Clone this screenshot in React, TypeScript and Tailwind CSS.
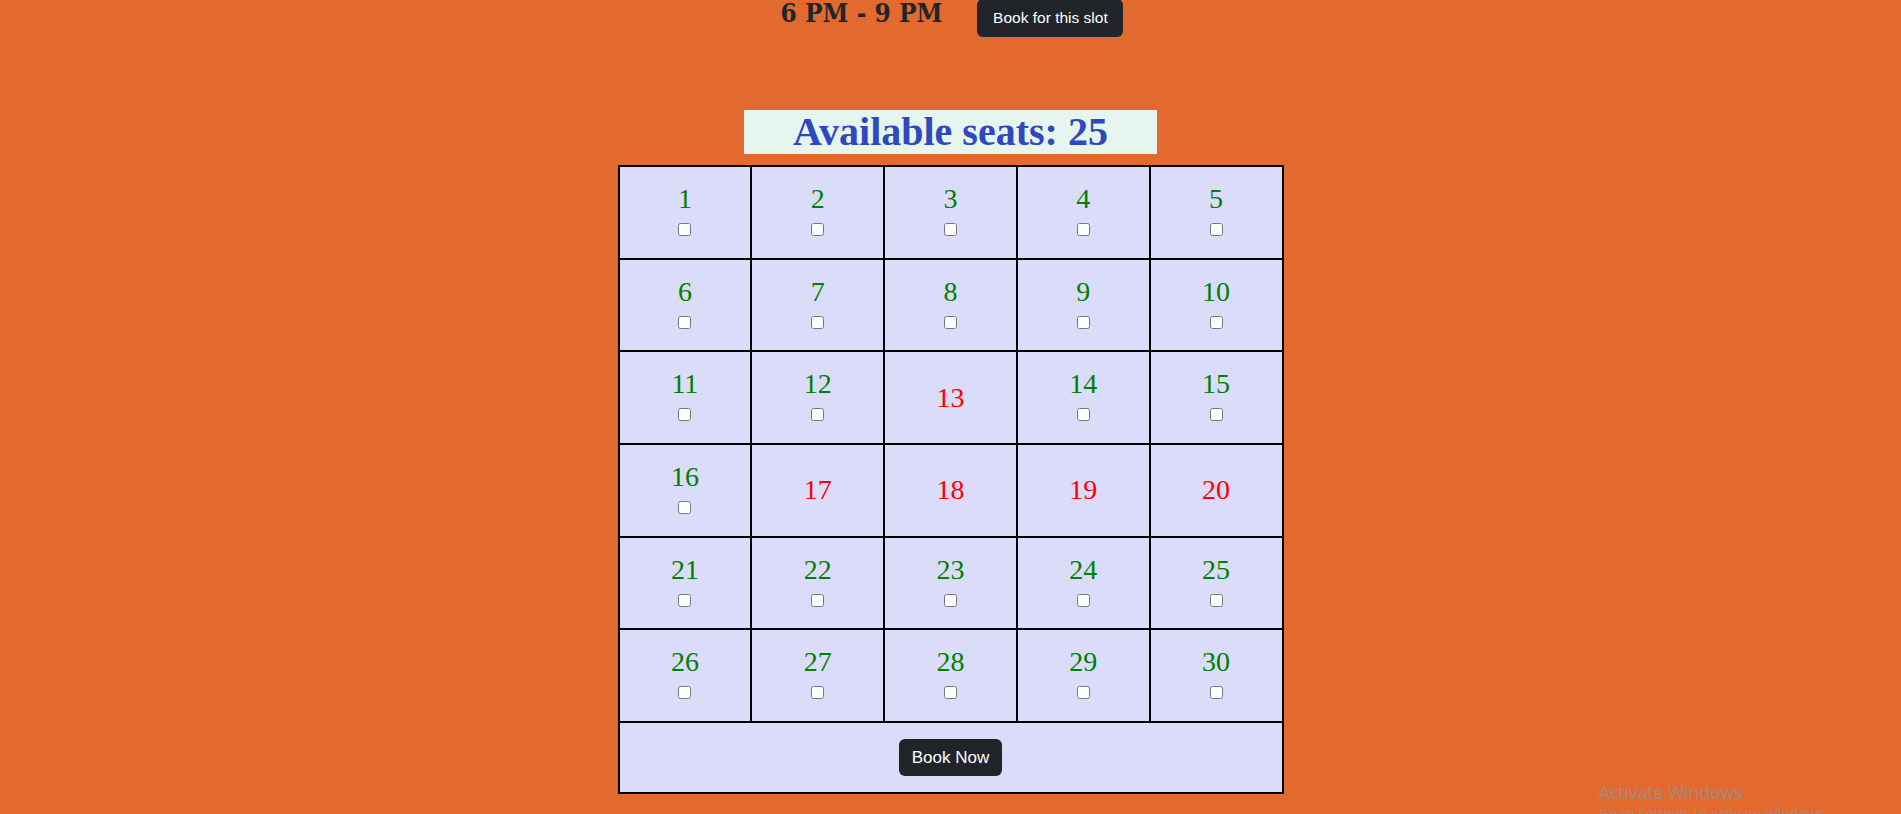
import React from "react";

// Seat picker for one show slot. Booked seats show only a red number, free ones a green number + checkbox.
const BOOKED = [13, 17, 18, 19, 20];

const rows: number[][] = [];
for (let r = 0; r < 6; r++) {
  rows.push([1, 2, 3, 4, 5].map((c) => r * 5 + c));
}

const serif = { fontFamily: '"Liberation Serif", "Times New Roman", serif' };
const sans = { fontFamily: '"Liberation Sans", Arial, sans-serif' };

function Seat({ n }: { n: number }) {
  const booked = BOOKED.includes(n);
  return (
    <td className="h-[92.7px] border-2 border-black p-0 align-middle">
      <div
        className={`flex flex-col items-center justify-center gap-[8px] ${booked ? "" : "pb-[6px]"}`}
      >
        <span
          style={serif}
          className={`text-[28px] leading-[32px] ${booked ? "text-[#ff0000]" : "text-[#008000]"}`}
        >
          {n}
        </span>
        {!booked && <input type="checkbox" className="m-0 h-[13px] w-[13px]" />}
      </div>
    </td>
  );
}

export default function App() {
  return (
    <div className="relative min-h-[814px] overflow-hidden bg-[#e26a2e]">
      <div className="flex h-[38px] items-start justify-center gap-[35px] pl-[3px]">
        <h2
          style={{ fontFamily: '"DejaVu Serif", serif', fontStretch: "condensed" }}
          className="-mt-[2px] text-[26px] font-bold leading-[31px] text-[#212529]"
        >
          6 PM - 9 PM
        </h2>
        <button
          style={sans}
          className="-mt-px h-[38px] w-[146px] rounded-[6px] bg-[#212529] text-[15.5px] text-white"
        >
          Book for this slot
        </button>
      </div>

      <div className="mt-[72px] flex justify-center">
        <h1
          style={serif}
          className="h-[44px] w-[413px] bg-[#e6f5ee] text-center text-[40px] font-bold leading-[44px] text-[#2f47bf]"
        >
          Available seats: 25
        </h1>
      </div>

      <div className="mt-[11px] flex justify-center">
        <table className="w-[666px] table-fixed border-collapse border-2 border-black bg-[#dadcfa]">
          <tbody>
            {rows.map((row, i) => (
              <tr key={i}>
                {row.map((n) => (
                  <Seat key={n} n={n} />
                ))}
              </tr>
            ))}
            <tr>
              <td colSpan={5} className="h-[71px] border-2 border-black p-0 align-middle">
                <div className="flex justify-center">
                  <button
                    style={sans}
                    className="h-[37px] w-[103px] rounded-[6px] bg-[#212529] text-[17px] text-white"
                  >
                    Book Now
                  </button>
                </div>
              </td>
            </tr>
          </tbody>
        </table>
      </div>

      {/* windows watermark over the page */}
      <div
        style={{ fontFamily: '"Open Sans", "Liberation Sans", sans-serif' }}
        className="absolute left-[1599px] top-[780px] text-[#a08b80]"
      >
        <div className="text-[17.5px] leading-[24px]">Activate Windows</div>
        <div className="mt-[1px] text-[14px] leading-[18px]">Go to Settings to activate Windows.</div>
      </div>
    </div>
  );
}
